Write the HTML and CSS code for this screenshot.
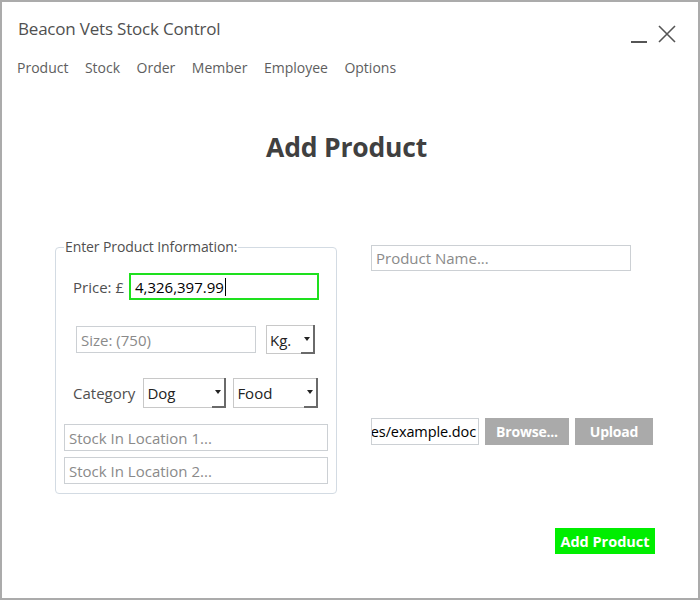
FILE: index.html
```html
<!DOCTYPE html>
<html>
<head>
<meta charset="utf-8">
<link rel="stylesheet" href="styles.css">
</head>
<body>
<div class="window">
  <div class="titlebar">
    <div class="title">Beacon Vets Stock Control</div>
    <div class="controls">
      <span class="min"></span>
      <svg class="close" width="18" height="18" viewBox="0 0 18 18"><path d="M1 1L17 17M17 1L1 17" stroke="#555" stroke-width="1.6" fill="none"/></svg>
    </div>
  </div>
  <nav class="menu">
    <span>Product</span><span>Stock</span><span>Order</span><span>Member</span><span>Employee</span><span>Options</span>
  </nav>
  <h1 class="heading">Add Product</h1>
  <div class="main">
    <fieldset class="group">
      <legend>Enter Product Information:</legend>
      <div class="row price-row">
        <span class="label">Price: £</span>
        <div class="field price">4,326,397.99<span class="caret"></span></div>
      </div>
      <div class="row size-row">
        <div class="field size placeholder">Size: (750)</div>
        <div class="select kg">Kg.<span class="arrow"></span></div>
      </div>
      <div class="row cat-row">
        <span class="label">Category</span>
        <div class="select dog">Dog<span class="arrow"></span></div>
        <div class="select food">Food<span class="arrow"></span></div>
      </div>
      <div class="field stock placeholder">Stock In Location 1...</div>
      <div class="field stock stock2 placeholder">Stock In Location 2...</div>
    </fieldset>
    <div class="right">
      <div class="field name placeholder">Product Name...</div>
      <div class="file-row">
        <div class="field file"><span>es/example.doc</span></div>
        <div class="btn browse">Browse...</div>
        <div class="btn upload">Upload</div>
      </div>
    </div>
  </div>
  <div class="footer">
    <div class="btn add">Add Product</div>
  </div>
</div>
</body>
</html>
```
FILE: styles.css
```css
html, body { margin: 0; padding: 0; background: #fff; }
body { font-family: "Open Sans", "Noto Sans", sans-serif; }
.window {
  width: 700px; height: 600px; box-sizing: border-box;
  border: 2px solid #ababab; background: #fff; position: relative;
}
.titlebar { display: flex; justify-content: space-between; align-items: flex-start; padding: 17px 22px 0 16px; height: 30px; }
.title { font-size: 17px; color: #505050; line-height: 20px; letter-spacing: -0.2px; }
.controls { display: flex; align-items: center; gap: 11px; padding-top: 6px; }
.min { width: 16px; height: 2px; background: #555; margin-top: 15px; }
.close { display: block; }
.menu { display: flex; gap: 0; padding-left: 15px; margin-top: 9px; font-size: 14px; color: #5e5e5e; line-height: 20px; }
.menu span { margin-right: 16.5px; }
.heading { margin: 53px 0 0 0; padding-right: 7px; text-align: center; font-size: 26.5px; font-weight: 700; color: #404040; line-height: 32px; letter-spacing: -0.2px; }
.main { display: flex; align-items: flex-start; margin-top: 76px; }
.group {
  margin: 0 0 0 53px; padding: 0 0 7px 8px; width: 282px; box-sizing: border-box;
  border: 1px solid #d3dbe3; border-radius: 4px; height: 255px;
}
.group legend { font-size: 14px; color: #505050; padding: 0 1px; line-height: 16px; letter-spacing: -0.1px; }
.row { display: flex; align-items: center; }
.label { font-size: 15px; color: #505050; }
.field {
  box-sizing: border-box; border: 1px solid #ccd0d4; background: #fff;
  font-size: 15px; color: #000; display: flex; align-items: center; padding-left: 4px; height: 27px;
  white-space: nowrap; overflow: hidden;
}
.placeholder { color: #8a8a8a; }
.price-row { margin-top: 18px; margin-left: 9px; }
.price { margin-left: 5px; width: 190px; height: 27px; border: 2px solid #1ee01e; padding-left: 4px; }
.caret { display: inline-block; width: 1px; height: 18px; background: #000; margin-left: 1px; }
.size-row { margin-top: 25px; margin-left: 12px; }
.size { width: 180px; }
.select {
  box-sizing: border-box; height: 29px; border: 1px solid #c8c8c8; position: relative;
  font-size: 15px; color: #222; display: flex; align-items: center; padding-left: 3px;
}
.select .arrow {
  position: absolute; right: -1px; top: -1px; bottom: -1px; width: 14px;
  border-right: 2px solid #6a6a6a; border-bottom: 2px solid #6a6a6a; box-sizing: border-box;
}
.select .arrow::after {
  content: ""; position: absolute; left: 3px; top: 12px;
  border-left: 3px solid transparent; border-right: 3px solid transparent; border-top: 4px solid #222;
}
.kg { width: 49px; margin-left: 10px; }
.cat-row { margin-top: 24px; margin-left: 9px; }
.dog { width: 83px; height: 30px; margin-left: 8px; }
.food { width: 85px; height: 30px; margin-left: 7px; }
.stock { width: 264px; margin-top: 16px; }
.stock2 { margin-top: 6px; }
.right { margin-left: 34px; margin-top: 6px; }
.name { width: 260px; height: 26px; }
.file-row { display: flex; margin-top: 147px; gap: 6px; }
.file { width: 108px; justify-content: flex-end; padding: 0 2px 0 0; font-size: 14.5px; letter-spacing: -0.1px; }
.btn {
  box-sizing: border-box; height: 27px; background: #aaaaaa; color: #fff; font-weight: 700;
  font-size: 14px; display: flex; align-items: center; justify-content: center; letter-spacing: -0.2px;
}
.browse { width: 84px; }
.upload { width: 78px; }
.footer { display: flex; justify-content: flex-end; padding-right: 43px; margin-top: 34px; }
.add { width: 100px; height: 26px; background: #00ee00; font-size: 14.5px; letter-spacing: 0; }
```
